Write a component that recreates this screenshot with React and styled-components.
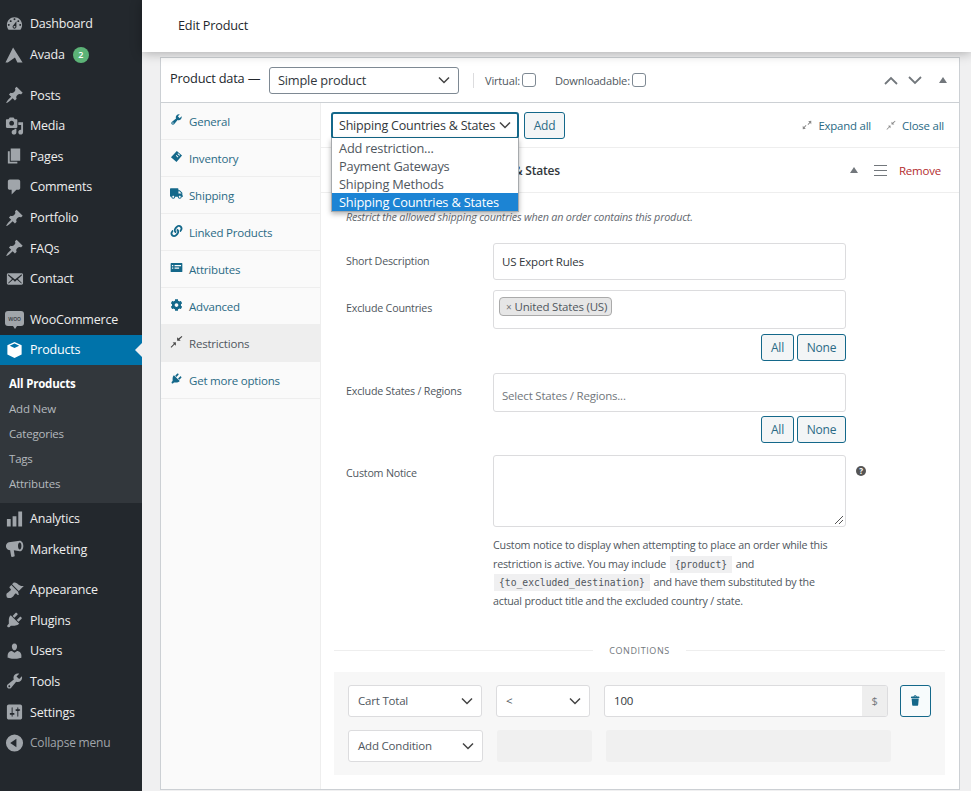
import React from 'react';
import styled, { createGlobalStyle } from 'styled-components';
import { FaTruck, FaLink, FaCog } from 'react-icons/fa';

const Global = createGlobalStyle`
  html, body { margin: 0; padding: 0; background: #f0f0f1; }
  body { font-family: "Open Sans", "Noto Sans", sans-serif; font-size: 12px; color: #50575e; letter-spacing: -0.2px; }
  * { box-sizing: border-box; }
`;

const Ic = ({ d, size = 20, color = 'currentColor' }) => (
  <svg width={size} height={size} viewBox="0 0 20 20" fill={color}><path d={d} /></svg>
);

const P = {
  dash: 'M3.76 16h12.48c1.1-1.37 1.76-3.11 1.76-5 0-4.42-3.58-8-8-8s-8 3.58-8 8c0 1.89.66 3.63 1.76 5zM10 4c.55 0 1 .45 1 1s-.45 1-1 1-1-.45-1-1 .45-1 1-1zM6 6c.55 0 1 .45 1 1s-.45 1-1 1-1-.45-1-1 .45-1 1-1zm8 0c.55 0 1 .45 1 1s-.45 1-1 1-1-.45-1-1 .45-1 1-1zm-5.37 5.55L12 7v6c0 1.1-.9 2-2 2s-2-.9-2-2c0-.57.24-1.08.63-1.45zM4 10c.55 0 1 .45 1 1s-.45 1-1 1-1-.45-1-1 .45-1 1-1zm12 0c.55 0 1 .45 1 1s-.45 1-1 1-1-.45-1-1 .45-1 1-1zm-5 3c0-.55-.45-1-1-1s-1 .45-1 1 .45 1 1 1 1-.45 1-1z',
  avada: 'M8.500 2L18.500 18h-5.500L10.500 12.500 3 18H.5z',
  pin: 'M10.44 3.02l1.82-1.82 6.36 6.35-1.83 1.82c-1.05-.68-2.48-.57-3.41.36l-.75.75c-.92.93-1.04 2.35-.35 3.41l-1.83 1.82-2.41-2.41-2.8 2.79c-.42.42-3.38 2.71-3.8 2.29s1.86-3.39 2.28-3.81l2.79-2.79L4.1 9.36l1.83-1.82c1.05.69 2.48.57 3.4-.36l.75-.75c.93-.92 1.05-2.35.36-3.41z',
  media: 'M13 11V4c0-.55-.45-1-1-1h-1.67L9 1H5L3.67 3H2c-.55 0-1 .45-1 1v7c0 .55.45 1 1 1h10c.55 0 1-.45 1-1zM7 4.5c1.38 0 2.5 1.12 2.5 2.5S8.38 9.5 7 9.5 4.5 8.38 4.5 7 5.62 4.5 7 4.5zM14 6h5v10.5c0 1.38-1.12 2.5-2.5 2.5S14 17.88 14 16.5s1.12-2.5 2.5-2.5c.17 0 .34.02.5.05V9h-3V6zm-4 8.05V13h2v3.5c0 1.38-1.12 2.5-2.5 2.5S7 17.88 7 16.5 8.12 14 9.5 14c.17 0 .34.02.5.05z',
  page: 'M6 15V2h10v13H6zm-1 1h8v2H3V5h2v11z',
  comment: 'M5 2h9c1.1 0 2 .9 2 2v7c0 1.1-.9 2-2 2h-2l-5 5v-5H5c-1.1 0-2-.9-2-2V4c0-1.1.9-2 2-2z',
  mail: 'M19 14.5v-9c0-.83-.67-1.5-1.5-1.5H3.49c-.83 0-1.5.67-1.5 1.5v9c0 .83.67 1.5 1.5 1.5H17.5c.83 0 1.5-.67 1.5-1.5zm-1.31-9.11c.33.33.15.67-.03.84L13.6 9.95l3.9 4.06c.12.14.2.36.06.51-.13.16-.43.15-.56.05l-4.37-3.73-2.14 1.95-2.13-1.95-4.37 3.73c-.13.1-.43.11-.56-.05-.14-.15-.06-.37.06-.51l3.9-4.06-4.06-3.72c-.18-.17-.36-.51-.03-.84s.67-.17.95.07l6.24 5.04 6.25-5.04c.28-.24.62-.4.95-.07z',
  cube: 'M10 1.5L17.5 5v9.8L10 18.5l-7.5-3.7V5zM10 3.2L5 5.5l5 2.4 5-2.4zM3.8 6.4l5.8 2.8 0 1-5.8-2.8z',
  bars: 'M18 18V2h-4v16h4zm-6 0V7H8v11h4zm-6 0v-8H2v8h4z',
  mega: 'M15.500 1.200c2.200 0 3.800 2.500 3.800 5.600s-1.600 5.600-3.800 5.600L9.300 11.300l.9 5.700c.1.5-.2.9-.7 1l-2 .3c-.5.1-.9-.2-1-.7L5.400 11.300 4 11C2.300 10.500 1 8.800 1 7s1.300-3.500 3-4zM15.500 3.200c-1 0-1.800 1.600-1.800 3.600s.8 3.600 1.800 3.600 1.800-1.600 1.800-3.600-.8-3.600-1.800-3.600z',
  brush: 'M14.48 11.06L7.41 3.99l1.5-1.5c.5-.56 2.3-.47 3.51.32 1.21.8 1.43 1.28 2.91 2.1 1.18.64 2.45 1.26 4.45.85zm-.71.71L6.7 4.7 4.93 6.47c-.39.39-.39 1.02 0 1.41l1.06 1.06c.39.39.39 1.03 0 1.42-.6.6-1.43 1.11-2.21 1.69-.35.26-.7.53-1.01.84C1.43 13.23 1 15.09 2.03 17.97c2.87 1.03 4.74.6 6.08-.74.31-.31.58-.66.84-1.01.58-.78 1.09-1.61 1.69-2.21.39-.39 1.03-.39 1.42 0l1.06 1.06c.39.39 1.02.39 1.41 0z',
  plug: 'M13.11 4.36L9.87 7.6 8 5.73l3.24-3.24c.35-.34 1.05-.2 1.56.32.52.51.66 1.21.31 1.55zm-8 1.77l.91-1.12 9.01 9.01-1.19.84c-.71.71-2.63 1.16-3.82 1.16H6.14L4.9 17.26c-.59.59-1.54.59-2.12 0-.59-.58-.59-1.53 0-2.12l1.24-1.24v-3.88c0-1.13.4-3.19 1.09-3.89zm7.26 3.97l3.24-3.24c.34-.35 1.04-.21 1.55.31.52.51.66 1.21.31 1.55l-3.24 3.25z',
  user: 'M10 9.25c-2.27 0-2.73-3.44-2.73-3.44C7 4.02 7.82 2 9.97 2c2.16 0 2.98 2.02 2.71 3.81 0 0-.41 3.44-2.68 3.44zm0 2.57L12.72 10c2.39 0 4.52 2.33 4.52 4.53v2.49s-3.65 1.13-7.24 1.13c-3.65 0-7.24-1.13-7.24-1.13v-2.49c0-2.25 1.94-4.48 4.47-4.48z',
  tool: 'M16.68 9.77c-1.34 1.34-3.3 1.67-4.95.99l-5.41 6.52c-.99.99-2.59.99-3.58 0s-.99-2.59 0-3.57l6.52-5.42c-.68-1.65-.35-3.61.99-4.95 1.28-1.28 3.12-1.62 4.72-1.06l-2.89 2.89 2.82 2.82 2.86-2.87c.53 1.58.18 3.39-1.08 4.65zM3.81 16.21c.4.39 1.04.39 1.43 0 .4-.4.4-1.04 0-1.43-.39-.4-1.03-.4-1.43 0-.39.39-.39 1.03 0 1.43z',
  settings: 'M18 16V4c0-1.1-.9-2-2-2H4c-1.1 0-2 .9-2 2v12c0 1.1.9 2 2 2h12c1.1 0 2-.9 2-2zM8 11h1c.55 0 1 .45 1 1s-.45 1-1 1H8v1.500c0 .28-.22.5-.5.5s-.5-.22-.5-.5V13H6c-.55 0-1-.45-1-1s.45-1 1-1h1V5.500c0-.28.22-.5.5-.5s.5.22.5.5V11zm5-2h-1c-.55 0-1-.45-1-1s.45-1 1-1h1V5.500c0-.28.22-.5.5-.5s.5.22.5.5V7h1c.55 0 1 .45 1 1s-.45 1-1 1h-1v5.500c0 .28-.22.5-.5.5s-.5-.22-.5-.5V9z',
  collapse: 'M10 1a9 9 0 100 18 9 9 0 000-18zm2 4.600v8.800L5.500 10z',
  trash: 'M12 4h3c.6 0 1 .4 1 1v1H3V5c0-.6.5-1 1-1h3c.2-1.100 1.300-2 2.500-2s2.300.9 2.500 2zM8 4h3c-.2-.6-.9-1-1.500-1S8.200 3.400 8 4zM4 7h11l-.9 10.100c0 .5-.5.9-1 .9H5.900c-.5 0-.9-.4-1-.9L4 7z',
  list: 'M2 3h16c.6 0 1 .4 1 1v12c0 .6-.4 1-1 1H2c-.6 0-1-.4-1-1V4c0-.6.4-1 1-1zm1 3v2h2V6zm4 0v2h10V6zM3 10v2h2v-2zm4 0v2h7v-2z',
  compress: 'M18 1.500l1 1-4.500 4.500 2 2H11V3.500l2 2zM9 11v5.500l-2-2L2 19.500l-1-1 5-5-2-2z',
  expand: 'M18.500 1.500v7l-2.300-2.300-3.700 3.700-1.400-1.400 3.700-3.700-2.300-2.300zM1.500 18.500v-7l2.300 2.300 3.700-3.700 1.400 1.400-3.700 3.700 2.300 2.300z',
  inventory: 'M10.500 1.500l8 7-8.500 10-8.500-7.500zM12.500 5l-1 1.200 3 2.500 1-1.200zM10 7.800l-1 1.200 3 2.500 1-1.200z',
};

const Page = styled.div`
  display: grid;
  grid-template-columns: 142px 829px;
  width: 971px;
  height: 791px;
  overflow: hidden;
`;

/* ---------- admin menu ---------- */
const Sidebar = styled.nav`
  background: #23282d;
  padding-top: 8.700px;
  height: 791px;
`;
const MenuItem = styled.div`
  display: flex;
  align-items: center;
  position: relative;
  height: 30.6px;
  padding-left: 5px;
  gap: 6px;
  color: ${p => (p.$active ? '#fff' : p.$muted ? '#a0a5aa' : '#eee')};
  background: ${p => (p.$active ? '#0073aa' : 'transparent')};
  font-size: ${p => (p.$muted ? 12 : 12.500)}px;
  svg { color: ${p => (p.$active ? '#fff' : '#a0a5aa')}; flex: 0 0 19px; }
`;
const Notch = styled.span`
  position: absolute;
  right: 0;
  top: 8px;
  border: 7px solid transparent;
  border-right-color: #f0f0f1;
  border-left-width: 0;
`;
const Gap = styled.div`
  height: ${p => p.$h || 10}px;
`;
const Badge = styled.span`
  display: inline-flex;
  align-items: center;
  justify-content: center;
  width: 16px;
  height: 16px;
  border-radius: 50%;
  background: #5cb377;
  color: #fff;
  font-size: 9px;
  font-weight: 600;
  margin-left: -1px;
`;
const Submenu = styled.div`
  background: #32373c;
  padding: 5.400px 0 7.600px 9px;
`;
const SubItem = styled.div`
  height: 25px;
  line-height: 25px;
  font-size: 11.500px;
  color: ${p => (p.$current ? '#fff' : '#b4b9be')};
  font-weight: ${p => (p.$current ? 700 : 400)};
`;
const WooLogo = styled.span`
  position: relative;
  flex: 0 0 19px;
  height: 15px;
  margin-top: -2px;
  border-radius: 3px;
  background: #a0a5aa;
  color: #23282d;
  font-size: 6.500px;
  line-height: 15px;
  text-align: center;
  &::after {
    content: '';
    position: absolute;
    left: 8px;
    bottom: -3px;
    border: 2px solid transparent;
    border-top: 3px solid #a0a5aa;
    border-bottom: 0;
  }
`;

/* ---------- main column ---------- */
const Main = styled.main`
  min-width: 0;
`;
const TopBar = styled.header`
  position: relative;
  z-index: 2;
  height: 52px;
  background: #fff;
  padding: 0 0 2px 36px;
  display: flex;
  align-items: center;
  font-size: 12.700px;
  color: #23282d;
  box-shadow: 0 1px 11px rgba(0, 0, 0, 0.3);
`;
const Wrap = styled.div`
  padding: 5px 11px 0 18px;
`;
const Panel = styled.section`
  background: #fff;
  border: 1px solid #ccd0d4;
`;
const PanelHead = styled.div`
  height: 45px;
  display: flex;
  align-items: center;
  padding: 0 12px 0 9px;
  border-bottom: 1px solid #ccd0d4;
`;
const PanelTitle = styled.span`
  font-size: 12.800px;
  color: #23282d;
  width: 99px;
  flex: none;
  margin-top: -4px;
`;
const Select = styled.div`
  display: flex;
  align-items: center;
  justify-content: space-between;
  flex: none;
  width: ${p => p.$w}px;
  height: ${p => p.$h || 27}px;
  padding: 0 ${p => p.$pr ?? 8}px 0 ${p => p.$pl ?? 8}px;
  background: #fff;
  border: ${p => (p.$focus ? '2px solid #14688a' : `1px solid ${p.$soft ? '#dcdcde' : '#7e8993'}`)};
  border-radius: 3px;
  color: ${p => (p.$soft ? '#50575e' : '#32373c')};
  font-size: ${p => p.$fs || 12.800}px;
  white-space: nowrap;
`;
const Chevron = () => (
  <svg width="12" height="8" viewBox="0 0 12 8" fill="none" stroke="#444" strokeWidth="1.500"><path d="M1 1.500l5 5 5-5" /></svg>
);
const VRule = styled.span`
  width: 1px;
  height: 15px;
  background: #dcdcde;
  margin: 0 11px 0 14px;
`;
const CheckLabel = styled.span`
  display: inline-flex;
  align-items: center;
  gap: 2px;
  font-size: 11.100px;
  margin-right: 19px;
`;
const CheckBox = styled.span`
  width: 14px;
  height: 14px;
  border: 1px solid #7e8993;
  border-radius: 3px;
  background: #fff;
`;
const HeadControls = styled.div`
  margin-left: auto;
  display: flex;
  align-items: center;
  gap: 10px;
  color: #72777c;
`;
const Tri = styled.span`
  width: 0;
  height: 0;
  border: 4px solid transparent;
  border-top: 0;
  border-bottom: 6px solid #72777c;
  margin-left: ${p => p.$ml || 0}px;
`;
const Body = styled.div`
  display: grid;
  grid-template-columns: 160px 1fr;
`;
const Tabs = styled.ul`
  list-style: none;
  margin: 0;
  padding: 0;
  background: #fafafa;
  border-right: 1px solid #eee;
`;
const Tab = styled.li`
  display: flex;
  align-items: center;
  gap: 6px;
  height: 37px;
  padding: 0 0 0 9px;
  font-size: 11.500px;
  color: ${p => (p.$active ? '#50575e' : '#2a6a85')};
  background: ${p => (p.$active ? '#eee' : 'transparent')};
  border-bottom: 1px solid #eee;
  svg { flex: 0 0 13px; color: ${p => (p.$active ? '#444' : '#14688a')}; margin-top: -3px; }
`;
const Content = styled.div`
  position: relative;
  min-width: 0;
`;
const Toolbar = styled.div`
  display: flex;
  align-items: center;
  height: 45px;
  padding: 0 15px 0 10px;
  gap: 5px;
  border-bottom: 1px solid #eee;
`;
const Btn = styled.button`
  height: ${p => p.$h || 27}px;
  width: ${p => p.$w}px;
  padding: 0;
  font: inherit;
  font-size: 12px;
  color: #2a6a85;
  background: #f3f5f6;
  border: 1px solid #14688a;
  border-radius: 3px;
  display: inline-flex;
  align-items: center;
  justify-content: center;
  letter-spacing: inherit;
`;
const ToolLinks = styled.div`
  margin-left: auto;
  display: flex;
  align-items: center;
  gap: 6px;
  color: #2a6a85;
  font-size: 11.400px;
  svg { color: #888; }
`;
const ToolLink = styled.span`
  margin-right: 9px;
  &:last-child { margin-right: 0; }
`;
const Menu = styled.ul`
  position: absolute;
  z-index: 3;
  top: 35px;
  left: 10px;
  width: 188px;
  margin: 0;
  padding: 1px 0 0;
  list-style: none;
  background: #fff;
  border: 1px solid #a7aaad;
  border-top: 0;
  box-shadow: 0 2px 5px rgba(0, 0, 0, 0.3);
`;
const MenuOpt = styled.li`
  height: 18px;
  line-height: 18px;
  padding-left: 7px;
  font-size: 12.800px;
  color: ${p => (p.$sel ? '#fff' : '#50575e')};
  background: ${p => (p.$sel ? '#1c84d4' : 'transparent')};
`;
const RuleHead = styled.div`
  display: flex;
  align-items: center;
  height: 45px;
  padding: 0 18px 0 84px;
  border-bottom: 1px solid #eee;
`;
const RuleTitle = styled.span`
  font-size: 12px;
  font-weight: 600;
  color: #32373c;
  margin-right: auto;
`;
const Remove = styled.span`
  color: #b32d2e;
  font-size: 11.500px;
  margin-left: 12px;
`;
const Burger = styled.span`
  width: 13px;
  height: 11px;
  margin-left: 16px;
  border-top: 1px solid #72777c;
  border-bottom: 1px solid #72777c;
  position: relative;
  &::after {
    content: '';
    position: absolute;
    left: 0;
    right: 0;
    top: 4px;
    height: 1px;
    background: #72777c;
  }
`;
const RuleBody = styled.div`
  padding: 14px 0 14px 13px;
`;
const Desc = styled.p`
  margin: 0 0 16px 12px;
  height: 20px;
  line-height: 20px;
  font-size: 10.800px;
  font-style: italic;
  color: #646970;
`;
const Field = styled.div`
  display: grid;
  grid-template-columns: 147px 353px auto;
  margin: 0 0 ${p => p.$mb ?? 10}px 12px;
`;
const Label = styled.label`
  font-size: 10.700px;
  line-height: 18px;
  padding-top: 8.500px;
  color: #50575e;
`;
const Control = styled.div`
  min-width: 0;
`;
const Input = styled.div`
  display: flex;
  align-items: ${p => p.$top ? 'flex-start' : 'center'};
  height: ${p => p.$h}px;
  padding: ${p => p.$top ? '6px' : '0'} 8px 0 ${p => p.$top ? '5px' : '8px'};
  border: 1px solid #dcdcde;
  border-radius: 3px;
  background: #fff;
  font-size: 11.500px;
  color: ${p => (p.$ph ? '#72777c' : '#32373c')};
  position: relative;
`;
const InputHint = styled.span`
  margin-top: 6px;
`;
const Chip = styled.span`
  display: inline-flex;
  align-items: center;
  gap: 3px;
  height: 19px;
  padding: 0 4px 0 6px;
  background: #e6e6e6;
  border: 1px solid #aaa;
  border-radius: 4px;
  font-size: 11.500px;
  color: #50575e;
  small { font-size: 10px; color: #777; }
`;
const BtnRow = styled.div`
  display: flex;
  justify-content: flex-end;
  gap: 3px;
  margin-top: ${p => p.$mt}px;
`;
const Grip = styled.svg`
  position: absolute;
  right: 1px;
  bottom: 1px;
`;
const Help = styled.span`
  margin: 11px 0 0 10px;
  width: 10px;
  height: 10px;
  border-radius: 50%;
  background: #555;
  color: #fff;
  font-size: 8px;
  font-weight: 700;
  line-height: 10px;
  text-align: center;
`;
const Hint = styled.div`
  margin: 9px 0 0;
`;
const HintLine = styled.div`
  font-size: 10.700px;
  line-height: 18.700px;
  height: 18.700px;
  white-space: nowrap;
  color: #50575e;
`;
const Code = styled.code`
  display: inline-block;
  font-family: "DejaVu Sans Mono", "Liberation Mono", monospace;
  font-size: 9.700px;
  line-height: 17px;
  letter-spacing: 0;
  background: #f0f0f1;
  padding: 0 5px;
  margin: 0 1px;
`;
const Divider = styled.div`
  display: flex;
  align-items: center;
  gap: 16px;
  height: 14px;
  margin: 33px 14px 14px 0;
  font-size: 9px;
  letter-spacing: 0.6px;
  color: #72777c;
  &::before, &::after { content: ''; flex: 1; height: 1px; background: #eee; }
`;
const Conditions = styled.div`
  margin-right: 14px;
  background: #f7f7f7;
  padding: 13px 14px;
  display: flex;
  flex-direction: column;
  gap: 13px;
`;
const CondRow = styled.div`
  display: flex;
  gap: 14px;
  align-items: center;
`;
const Blank = styled.div`
  width: ${p => p.$w}px;
  height: 32px;
  background: #f0f0f0;
  border-radius: 3px;
  flex: none;
`;
const AmountBox = styled.div`
  display: flex;
  width: 284px;
  height: 32px;
  border: 1px solid #dcdcde;
  border-radius: 3px;
  background: #fff;
  overflow: hidden;
  font-size: 11.500px;
  color: #32373c;
  flex: none;
`;
const AmountVal = styled.span`
  flex: 1;
  padding-left: 9px;
  line-height: 30px;
`;
const AmountUnit = styled.span`
  width: 25px;
  background: #eee;
  color: #72777c;
  text-align: center;
  line-height: 30px;
  font-size: 11px;
`;
const TrashBtn = styled(Btn)`
  margin-left: -2px;
  background: #f7fbfc;
  color: #14688a;
`;

const menuA = [
  ['Posts', P.pin], ['Media', P.media], ['Pages', P.page], ['Comments', P.comment],
  ['Portfolio', P.pin], ['FAQs', P.pin], ['Contact', P.mail],
];
const menuB = [
  ['Appearance', P.brush], ['Plugins', P.plug], ['Users', P.user], ['Tools', P.tool], ['Settings', P.settings],
];
const tabs = [
  ['General', <Ic d={P.tool} size={13} />],
  ['Inventory', <Ic d={P.inventory} size={13} />],
  ['Shipping', <FaTruck size={13} />],
  ['Linked Products', <FaLink size={12} />],
  ['Attributes', <Ic d={P.list} size={13} />],
  ['Advanced', <FaCog size={12} />],
  ['Restrictions', <Ic d={P.compress} size={13} />, true],
  ['Get more options', <Ic d={P.plug} size={13} />],
];

export default function App() {
  return (
    <>
      <Global />
      <Page>
        <Sidebar>
          <MenuItem><Ic d={P.dash} />Dashboard</MenuItem>
          <MenuItem><Ic d={P.avada} />Avada&nbsp;<Badge>2</Badge></MenuItem>
          <Gap />
          {menuA.map(([t, d]) => <MenuItem key={t}><Ic d={d} />{t}</MenuItem>)}
          <Gap />
          <MenuItem><WooLogo>woo</WooLogo>WooCommerce</MenuItem>
          <MenuItem $active><Ic d={P.cube} />Products<Notch /></MenuItem>
          <Submenu>
            <SubItem $current>All Products</SubItem>
            <SubItem>Add New</SubItem>
            <SubItem>Categories</SubItem>
            <SubItem>Tags</SubItem>
            <SubItem>Attributes</SubItem>
          </Submenu>
          <MenuItem><Ic d={P.bars} />Analytics</MenuItem>
          <MenuItem><Ic d={P.mega} />Marketing</MenuItem>
          <Gap $h={10} />
          {menuB.map(([t, d]) => <MenuItem key={t}><Ic d={d} />{t}</MenuItem>)}
          <MenuItem $muted><Ic d={P.collapse} />Collapse menu</MenuItem>
        </Sidebar>
        <Main>
          <TopBar>Edit Product</TopBar>
          <Wrap>
            <Panel>
              <PanelHead>
                <PanelTitle>Product data —</PanelTitle>
                <Select $w={190}>Simple product<Chevron /></Select>
                <VRule />
                <CheckLabel>Virtual:<CheckBox /></CheckLabel>
                <CheckLabel>Downloadable:<CheckBox /></CheckLabel>
                <HeadControls>
                  <svg width="14" height="9" viewBox="0 0 14 9" fill="none" stroke="#72777c" strokeWidth="1.800"><path d="M1 8l6-6 6 6" /></svg>
                  <svg width="14" height="9" viewBox="0 0 14 9" fill="none" stroke="#72777c" strokeWidth="1.800"><path d="M1 1l6 6 6-6" /></svg>
                  <Tri $ml={7} />
                </HeadControls>
              </PanelHead>
              <Body>
                <Tabs>
                  {tabs.map(([t, icon, active]) => <Tab key={t} $active={active}>{icon}<span>{t}</span></Tab>)}
                </Tabs>
                <Content>
                  <Toolbar>
                    <Select $w={188} $fs={12.500} $focus $pl={6} $pr={6}>Shipping Countries &amp; States<Chevron /></Select>
                    <Btn $w={41}>Add</Btn>
                    <ToolLinks>
                      <Ic d={P.expand} size={10} /><ToolLink>Expand all</ToolLink>
                      <Ic d={P.compress} size={10} /><ToolLink>Close all</ToolLink>
                    </ToolLinks>
                  </Toolbar>
                  <Menu>
                    <MenuOpt>Add restriction...</MenuOpt>
                    <MenuOpt>Payment Gateways</MenuOpt>
                    <MenuOpt>Shipping Methods</MenuOpt>
                    <MenuOpt $sel>Shipping Countries &amp; States</MenuOpt>
                  </Menu>
                  <RuleHead>
                    <RuleTitle>Shipping Countries &amp; States</RuleTitle>
                    <Tri />
                    <Burger />
                    <Remove>Remove</Remove>
                  </RuleHead>
                  <RuleBody>
                    <Desc>Restrict the allowed shipping countries when an order contains this product.</Desc>
                    <Field>
                      <Label>Short Description</Label>
                      <Control><Input $h={37}>US Export Rules</Input></Control>
                    </Field>
                    <Field $mb={12}>
                      <Label>Exclude Countries</Label>
                      <Control>
                        <Input $h={39} $top><Chip><small>×</small>United States (US)</Chip></Input>
                        <BtnRow $mt={5}><Btn $w={33}>All</Btn><Btn $w={49}>None</Btn></BtnRow>
                      </Control>
                    </Field>
                    <Field $mb={12}>
                      <Label>Exclude States / Regions</Label>
                      <Control>
                        <Input $h={39} $ph><InputHint>Select States / Regions...</InputHint></Input>
                        <BtnRow $mt={4}><Btn $w={33}>All</Btn><Btn $w={49}>None</Btn></BtnRow>
                      </Control>
                    </Field>
                    <Field $mb={0}>
                      <Label>Custom Notice</Label>
                      <Control>
                        <Input $h={72}>
                          <Grip width="10" height="10" viewBox="0 0 10 10" stroke="#555" strokeWidth="1"><path d="M1 9l8-8M5 9l4-4" /></Grip>
                        </Input>
                        <Hint>
                          <HintLine>Custom notice to display when attempting to place an order while this</HintLine>
                          <HintLine>restriction is active. You may include <Code>{'{product}'}</Code> and</HintLine>
                          <HintLine><Code>{'{to_excluded_destination}'}</Code> and have them substituted by the</HintLine>
                          <HintLine>actual product title and the excluded country / state.</HintLine>
                        </Hint>
                      </Control>
                      <Help>?</Help>
                    </Field>
                    <Divider>CONDITIONS</Divider>
                    <Conditions>
                      <CondRow>
                        <Select $w={134} $h={32} $soft $fs={11.500} $pl={9}>Cart Total<Chevron /></Select>
                        <Select $w={94} $h={32} $soft $fs={11.500} $pl={9}>&lt;<Chevron /></Select>
                        <AmountBox><AmountVal>100</AmountVal><AmountUnit>$</AmountUnit></AmountBox>
                        <TrashBtn $w={32} $h={32}><Ic d={P.trash} size={13} /></TrashBtn>
                      </CondRow>
                      <CondRow>
                        <Select $w={135} $h={32} $soft $fs={11.500} $pl={9}>Add Condition<Chevron /></Select>
                        <Blank $w={95} />
                        <Blank $w={285} />
                      </CondRow>
                    </Conditions>
                  </RuleBody>
                </Content>
              </Body>
            </Panel>
          </Wrap>
        </Main>
      </Page>
    </>
  );
}
